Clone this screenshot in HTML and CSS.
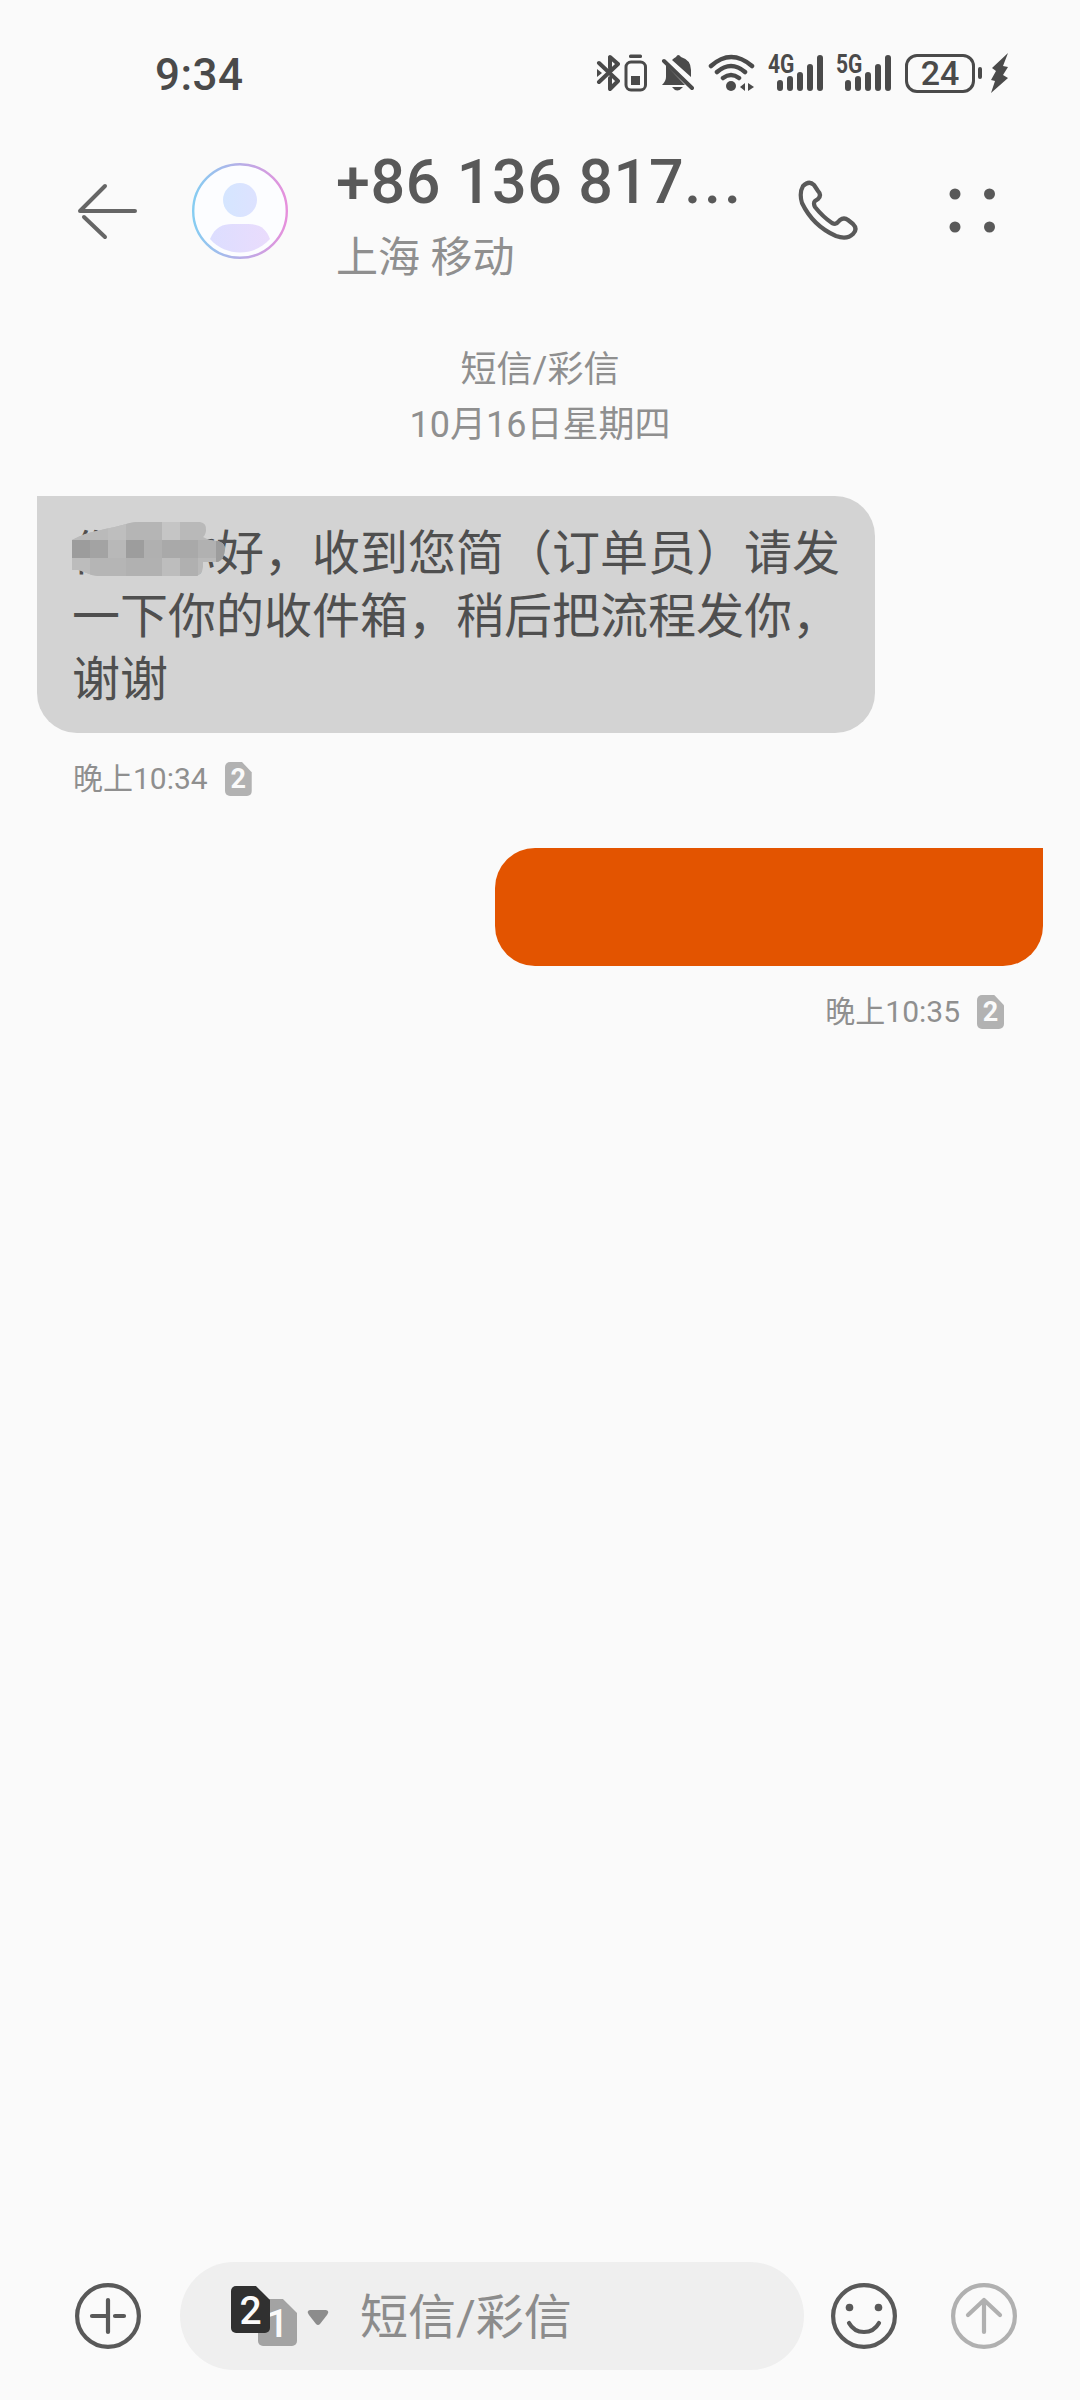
FILE: index.html
```html
<!DOCTYPE html>
<html lang="zh-CN">
<head>
    <meta charset="UTF-8">
    <meta name="viewport" content="width=device-width, initial-scale=1.0">
    <title>短信/彩信</title>
    <link rel="stylesheet" href="styles.css">
</head>
<body>
<div class="phone">
    <div class="status-bar">
        <span class="clock">9:34</span>
        <div class="status-icons">
            <svg class="bluetooth" width="24" height="40" viewBox="0 0 24 40" fill="none" stroke="#4a4a4a" stroke-width="4" stroke-linejoin="round" stroke-linecap="round">
                <path d="M3 10L22 28L14 36V25M3 29L22 11L14 4V15"/>
                <path d="M1 16L6 20L1 24Z" fill="#4a4a4a" stroke="none"/>
            </svg>
            <svg class="device-battery" width="23" height="40" viewBox="0 0 23 40">
                <rect x="5" y="1.500" width="13" height="3.500" rx="1.500" fill="#4a4a4a"/>
                <rect x="2" y="9" width="19.500" height="28" rx="5" fill="none" stroke="#4a4a4a" stroke-width="3"/>
                <rect x="7" y="23" width="9" height="9" fill="#4a4a4a"/>
            </svg>
            <svg class="muted" width="34" height="40" viewBox="0 0 34 40" fill="#4a4a4a">
                <path d="M6 12L25 32H2Q6 28 6 24Z"/>
                <path d="M12 7Q14 5 16 4Q18 0 21 4Q31 7 31 17V24Z"/>
                <path d="M12 34H23Q17 41 12 34Z"/>
                <path d="M4 8L32 35" stroke="#4a4a4a" stroke-width="4" stroke-linecap="round"/>
            </svg>
            <svg class="wifi" width="48" height="40" viewBox="0 0 48 40" fill="none" stroke="#4a4a4a" stroke-width="4.500" stroke-linecap="round">
                <path d="M4 13Q24 -5 45 13M10 19Q24 7 38 19M16 25Q24 19 32 25"/>
                <circle cx="24" cy="33" r="5" fill="#4a4a4a" stroke="none"/>
                <path d="M33 34L38 30V38ZM41 30L47 34L41 38Z" fill="#4a4a4a" stroke="none"/>
            </svg>
            <div class="signal">
                <span>4G</span>
                <svg width="48" height="40" viewBox="0 0 48 40" stroke="#4a4a4a" stroke-width="6" stroke-linecap="round">
                    <path d="M5 30V35M15 26V35M25 22V35M35 14V35M45 5V35"/>
                </svg>
            </div>
            <div class="signal">
                <span>5G</span>
                <svg width="48" height="40" viewBox="0 0 48 40" stroke="#4a4a4a" stroke-width="6" stroke-linecap="round">
                    <path d="M5 30V35M15 26V35M25 22V35M35 14V35M45 5V35"/>
                </svg>
            </div>
            <div class="battery">24</div>
            <div class="battery-cap"></div>
            <svg width="18" height="40" viewBox="0 0 18 40" fill="#4a4a4a">
                <path d="M18 0L2 15L6 18L1 27L5 28L1 40L18 25L13 22L18 14L13 13Z"/>
            </svg>
        </div>
    </div>

    <header>
        <svg class="back" width="60" height="60" viewBox="0 0 60 60" fill="none" stroke="#666" stroke-width="4" stroke-linecap="round" stroke-linejoin="round">
            <path d="M57 30H2L27 5M6 36L27 56"/>
        </svg>
        <svg class="avatar" width="96" height="96" viewBox="0 0 96 96">
            <defs>
                <linearGradient id="ring"><stop offset="0" stop-color="#86cdf2"/><stop offset="1" stop-color="#e690dc"/></linearGradient>
                <linearGradient id="head"><stop offset="0" stop-color="#d5e6ff"/><stop offset="1" stop-color="#dde2ff"/></linearGradient>
                <linearGradient id="torso"><stop offset="0" stop-color="#dcdeff"/><stop offset="1" stop-color="#eadcfc"/></linearGradient>
            </defs>
            <circle cx="48" cy="48" r="46.800" fill="#fcfdff" stroke="url(#ring)" stroke-width="2.400"/>
            <circle cx="48" cy="37" r="17" fill="url(#head)"/>
            <path d="M18 76C23 64 31 61 40 61H56C67 61 74 65 78 76C62 94 34 94 18 76Z" fill="url(#torso)"/>
        </svg>
        <div class="contact">
            <h1>+86 136 817<span class="dots">...</span></h1>
            <p>上海 移动</p>
        </div>
        <svg class="call" width="62" height="62" viewBox="0 0 62 62" fill="none" stroke="#595959" stroke-width="4.200" stroke-linejoin="round">
            <path d="M5 6Q11 0 16 5L20 11Q24 15 20 19L17 21Q15 23 17 27Q25 37 34 43Q38 45 40 42L42 40Q46 37 50 40L55 44Q60 49 55 54Q49 60 38 56Q15 46 4 23Q1 13 5 6Z"/>
        </svg>
        <svg class="more" width="46" height="46" viewBox="0 0 46 46" fill="#595959">
            <circle cx="6" cy="6" r="5.500"/><circle cx="40.500" cy="6" r="5.500"/>
            <circle cx="6" cy="39" r="5.500"/><circle cx="40.500" cy="39" r="5.500"/>
        </svg>
    </header>

    <main>
        <div class="date">短信/彩信<br>10月16日星期四</div>

        <div class="message received">
            <div class="bubble">
                你　你好，收到您简（订单员）请发<br>一下你的收件箱，稍后把流程发你，<br>谢谢
                <svg class="mosaic" width="154" height="54" viewBox="0 0 154 54">
                    <clipPath id="brush"><path d="M0 18C18 8 35 8 58 1Q62 0 68 0H128Q135 1 134 9Q133 14 131 15Q138 19 146 19Q153 21 153 27Q152 38 146 40H131Q132 52 125 54H26Q18 53 12 50Q6 47 0 48Z"/></clipPath>
                    <g clip-path="url(#brush)">
                        <rect width="154" height="54" fill="#b9b9b9"/>
                        <rect y="0" width="36" height="18" fill="#bababa"/>
                        <rect x="36" y="0" width="18" height="18" fill="#bebebe"/>
                        <rect x="54" y="0" width="36" height="18" fill="#b5b5b5"/>
                        <rect x="90" y="0" width="18" height="18" fill="#c5c5c5"/>
                        <rect x="0" y="18" width="18" height="18" fill="#9c9c9c"/>
                        <rect x="18" y="18" width="18" height="18" fill="#a3a3a3"/>
                        <rect x="36" y="18" width="18" height="18" fill="#b8b8b8"/>
                        <rect x="54" y="18" width="18" height="18" fill="#9d9d9d"/>
                        <rect x="72" y="18" width="18" height="18" fill="#b0b0b0"/>
                        <rect x="90" y="18" width="36" height="18" fill="#a9a9a9"/>
                        <rect x="126" y="18" width="18" height="18" fill="#b1b1b1"/>
                        <rect x="144" y="18" width="10" height="22" fill="#9d9d9d"/>
                        <rect x="0" y="36" width="18" height="18" fill="#bcbcbc"/>
                        <rect x="18" y="36" width="36" height="18" fill="#b5b5b5"/>
                        <rect x="54" y="36" width="36" height="18" fill="#b1b1b1"/>
                        <rect x="90" y="36" width="18" height="18" fill="#bdbdbd"/>
                        <rect x="108" y="36" width="18" height="18" fill="#b0b0b0"/>
                    </g>
                </svg>
            </div>
            <div class="meta">
                <span>晚上10:34</span>
                <i class="sim small">2</i>
            </div>
        </div>

        <div class="message sent">
            <div class="bubble"></div>
            <div class="meta">
                <span>晚上10:35</span>
                <i class="sim small">2</i>
            </div>
        </div>
    </main>

    <footer>
        <svg width="66" height="66" viewBox="0 0 66 66" fill="none" stroke="#595959" stroke-width="4.200" stroke-linecap="round">
            <circle cx="33" cy="33" r="30.900"/>
            <path d="M33 17V49M17 33H33M40 33H49"/>
        </svg>
        <div class="input">
            <div class="sims">
                <i class="sim back-card">1</i>
                <i class="sim front-card">2</i>
            </div>
            <svg class="caret" width="22" height="16" viewBox="0 0 22 16" fill="#8c8c8c">
                <path d="M3 0H19Q23 1 20 5L13 14Q11 16 9 14L2 5Q-1 1 3 0Z"/>
            </svg>
            <span class="placeholder">短信/彩信</span>
        </div>
        <svg class="emoji" width="66" height="66" viewBox="0 0 66 66" fill="none" stroke="#595959" stroke-width="4.200" stroke-linecap="round">
            <circle cx="33" cy="33" r="30.900"/>
            <circle cx="18.500" cy="24.500" r="3.800" fill="#595959" stroke="none"/>
            <circle cx="47.500" cy="24.500" r="3.800" fill="#595959" stroke="none"/>
            <path d="M18 40Q23 49 33 49T48 40"/>
        </svg>
        <svg class="send" width="66" height="66" viewBox="0 0 66 66" fill="none" stroke="#b0b0b0" stroke-width="4.200" stroke-linecap="round" stroke-linejoin="round">
            <circle cx="33" cy="33" r="30.900"/>
            <path d="M33 49V17M17 32L33 17L49 32"/>
        </svg>
    </footer>
</div>
</body>
</html>
```

FILE: styles.css
```css
* {
    box-sizing: border-box;
}

body {
    font-family: Roboto, "Noto Sans CJK SC", sans-serif;
    background-color: #fafafa;
    margin: 0;
    padding: 0;
}

svg {
    display: block;
    flex-shrink: 0;
}

.phone {
    display: flex;
    flex-direction: column;
    width: 1080px;
    height: 2400px;
}

.status-bar {
    display: flex;
    justify-content: space-between;
    align-items: center;
    height: 146px;
    padding: 0 72px 0 155px;
    color: #4a4a4a;
}

.clock {
    padding-top: 3px;
    font-size: 44px;
    font-weight: 500;
    letter-spacing: 0.5px;
}

.status-icons {
    display: flex;
    align-items: center;
}

.device-battery {
    margin-left: 4px;
}

.muted {
    margin-left: 13px;
}

.wifi {
    margin-left: 13px;
}

.signal {
    position: relative;
    margin-left: 20px;
}

.signal span {
    position: absolute;
    left: -7px;
    top: -1px;
    font-size: 25px;
    line-height: 25px;
    font-weight: bold;
    transform: scaleX(0.84);
    transform-origin: left;
}

.battery {
    width: 70px;
    height: 39px;
    margin-left: 14px;
    border: 3px solid #4a4a4a;
    border-radius: 12px;
    font-size: 34px;
    font-weight: 500;
    line-height: 33px;
    text-align: center;
}

.battery-cap {
    width: 4px;
    height: 12px;
    margin: 0 8px 0 3px;
    border-radius: 2px;
    background-color: #4a4a4a;
}

header {
    display: flex;
    align-items: center;
    height: 130px;
    padding-left: 78px;
}

.avatar {
    margin-left: 54px;
}

.contact {
    width: 410px;
    margin-left: 48px;
}

h1 {
    margin: 0;
    font-size: 61px;
    line-height: 72px;
    font-weight: 500;
    letter-spacing: 0.6px;
    color: #595959;
    white-space: nowrap;
}

.dots {
    letter-spacing: 3px;
}

.contact p {
    margin: 10px 0 -11px;
    font-size: 42px;
    line-height: 60px;
    color: #8f8f8f;
}

.call {
    margin-left: 52px;
}

.more {
    margin-left: 89px;
}

main {
    flex: 1;
    padding: 67px 37px 0;
}

.date {
    font-size: 36px;
    line-height: 55px;
    text-align: center;
    color: #8f8f8f;
}

.message {
    display: flex;
    flex-direction: column;
    align-items: flex-start;
}

.received {
    margin-top: 43px;
}

.sent {
    align-items: flex-end;
    margin-top: 52px;
}

.bubble {
    position: relative;
    border-radius: 40px;
}

.received .bubble {
    width: 838px;
    height: 237px;
    padding: 22px 35px;
    border-top-left-radius: 0;
    background-color: #d3d3d3;
    color: #4f4f4f;
    font-family: "Noto Sans CJK SC", sans-serif;
    font-size: 48px;
    line-height: 63px;
    white-space: nowrap;
}

.sent .bubble {
    width: 548px;
    height: 118px;
    border-top-right-radius: 0;
    background-color: #e35400;
}

.mosaic {
    position: absolute;
    left: 35px;
    top: 26px;
}

.meta {
    display: flex;
    align-items: center;
    gap: 17px;
    height: 34px;
    margin: 29px 39px 0 36px;
    font-size: 30px;
    line-height: 34px;
    color: #8f8f8f;
}

.sim {
    display: block;
    width: 39px;
    height: 47px;
    border-radius: 5px;
    clip-path: polygon(0 0, 64% 0, 100% 30%, 100% 100%, 0 100%);
    color: #fafafa;
    font-size: 39px;
    line-height: 51px;
    font-style: normal;
    font-weight: 500;
    text-align: center;
}

.sim.small {
    width: 27px;
    height: 34px;
    background-color: #b2b2b2;
    font-size: 27px;
    line-height: 35px;
    font-weight: bold;
}

footer {
    display: flex;
    align-items: center;
    height: 108px;
    margin-bottom: 30px;
    padding-left: 75px;
}

.input {
    display: flex;
    align-items: center;
    width: 624px;
    height: 108px;
    margin-left: 39px;
    padding-left: 51px;
    border-radius: 54px;
    background-color: #efefef;
}

.sims {
    position: relative;
    width: 66px;
    height: 60px;
}

/* the active card lies over the other one */
.front-card,
.back-card {
    position: absolute;
}

.front-card {
    left: 0;
    top: 0;
    background-color: #303030;
}

.back-card {
    left: 27px;
    top: 13px;
    background-color: #a3a3a3;
}

.caret {
    margin: 3px 0 0 10px;
}

.placeholder {
    margin-left: 31px;
    padding-top: 4px;
    font-size: 48px;
    line-height: 60px;
    color: #8c8c8c;
}

.emoji {
    margin-left: 27px;
}

.send {
    margin-left: 54px;
}
```
